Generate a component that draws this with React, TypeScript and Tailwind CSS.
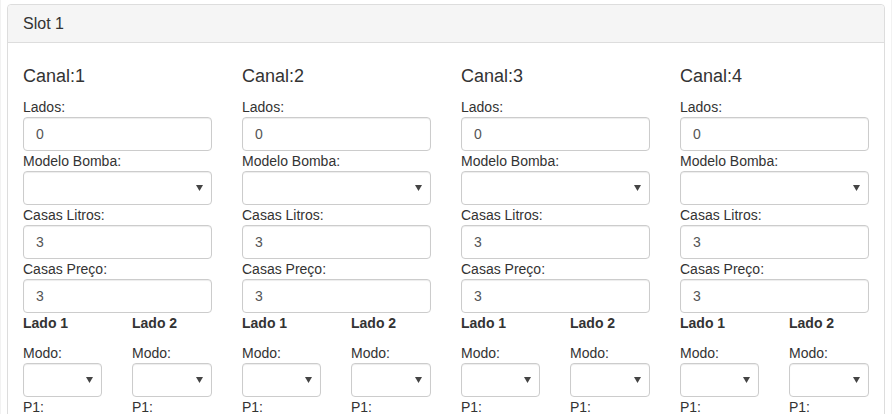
import React from 'react';

const canais = [1, 2, 3, 4];

const font = { fontFamily: '"Liberation Sans", Arial, Helvetica, sans-serif' };

function Label({ children }: { children: React.ReactNode }) {
    return <label className="block h-[20px] text-[14px] leading-[20px] text-[#333]">{children}</label>;
}

function Input({ value }: { value: string }) {
    return (
        <input
            type="text"
            defaultValue={value}
            className="block h-[34px] w-full rounded-[4px] border border-[#ccc] bg-white px-[12px] text-[14px] text-[#555] shadow-[inset_0_1px_1px_rgba(0,0,0,0.075)] outline-none"
            style={font}
        />
    );
}

function Select() {
    return (
        <div className="relative h-[34px] w-full rounded-[4px] border border-[#ccc] bg-white shadow-[inset_0_1px_1px_rgba(0,0,0,0.075)]">
            {/* seta do select */}
            <svg className="absolute right-[8px] top-[13px]" width="7" height="6" viewBox="0 0 7 6">
                <path d="M0 0h7L3.5 6z" fill="#444" />
            </svg>
        </div>
    );
}

function Lado({ n }: { n: number }) {
    return (
        <div className={n === 1 ? 'w-[109px] px-[15px]' : 'w-[110px] px-[15px]'}>
            <div className="h-[20px] text-[14px] font-bold leading-[20px] text-[#333]">Lado {n}</div>
            <div className="mt-[10px]">
                <Label>Modo:</Label>
                <Select />
                <Label>P1:</Label>
                <Input value="" />
            </div>
        </div>
    );
}

function Canal({ n }: { n: number }) {
    return (
        <div className="w-[219px] px-[15px]">
            <h4 className="mb-[11px] mt-[8px] h-[20px] text-[18px] leading-[20px] text-[#333]">Canal:{n}</h4>
            <Label>Lados:</Label>
            <Input value="0" />
            <Label>Modelo Bomba:</Label>
            <Select />
            <Label>Casas Litros:</Label>
            <Input value="3" />
            <Label>Casas Preço:</Label>
            <Input value="3" />
            <div className="-mx-[15px] flex">
                <Lado n={1} />
                <Lado n={2} />
            </div>
        </div>
    );
}

export default function App() {
    return (
        <div className="h-[414px] overflow-hidden border-x border-[#f2f2f2] bg-white" style={font}>
            {/* Painel do slot */}
            <div className="ml-[6px] mt-[4px] w-[878px] rounded-[4px] border border-[#ddd] bg-white">
                <div className="h-[38px] rounded-t-[4px] border-b border-[#ddd] bg-[#f5f5f5] px-[15px] text-[16px] leading-[37px] text-[#333]">
                    Slot 1
                </div>
                <div className="px-[15px] pt-[15px]">
                    <div className="-mx-[15px] flex">
                        {canais.map((c) => (
                            <Canal key={c} n={c} />
                        ))}
                    </div>
                </div>
            </div>
        </div>
    );
}
